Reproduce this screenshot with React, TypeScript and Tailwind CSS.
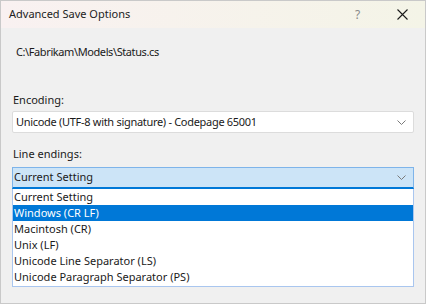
import React from "react";

const Chevron = () => (
  <svg width="9" height="5" viewBox="0 0 9 5" className="text-[#7a7a7a]">
    <path d="M0.5 0.5 L4.5 4.5 L8.5 0.5" fill="none" stroke="currentColor" strokeWidth="1" />
  </svg>
);

export default function App() {
  const items = [
    "Current Setting",
    "Windows (CR LF)",
    "Macintosh (CR)",
    "Unix (LF)",
    "Unicode Line Separator (LS)",
    "Unicode Paragraph Separator (PS)",
  ];
  return (
    <div
      className="w-[426px] h-[304px] border border-[#c9c9c9] bg-[#f0f0f0] flex flex-col text-[11px] text-[#1a1a1a]"
      style={{ fontFamily: '"Segoe UI", "Noto Sans", sans-serif' }}
    >
      <div className="h-[27px] flex items-center bg-gradient-to-r from-[#f9f1f1] to-[#f4f4e7]">
        <div className="pl-[8px] flex-1 text-[11px] text-[#222]">Advanced Save Options</div>
        <div className="w-[46px] flex justify-center text-[#8a8a8a] text-[12px] pl-[3px]">?</div>
        <div className="w-[46px] flex justify-center">
          <svg width="11" height="11" viewBox="0 0 11 11">
            <path d="M0.5 0.5 L10.5 10.5 M10.5 0.5 L0.5 10.5" stroke="#1a1a1a" strokeWidth="1.1" />
          </svg>
        </div>
      </div>
      <div className="px-[11px] flex flex-col">
        <div className="pl-[4px] mt-[15px] h-[17px] leading-[17px] tracking-[-0.4px]">C:\Fabrikam\Models\Status.cs</div>
        <div className="pl-[1px] mt-[31px] h-[17px] leading-[17px]">Encoding:</div>
        <div className="mt-[3px] h-[22px] bg-white border border-[#dcdcdc] rounded-[2px] flex items-center pl-[3px] pr-[7px]">
          <span className="flex-1 tracking-[-0.3px]">Unicode (UTF-8 with signature) - Codepage 65001</span>
          <Chevron />
        </div>
        <div className="pl-[1px] mt-[12px] h-[17px] leading-[17px]">Line endings:</div>
        <div className="mt-[5px] h-[22px] bg-[#cce4f7] border border-[#7eb4ea] border-b-[2px] border-b-[#0078d7] flex items-center pl-[1px] pr-[7px]">
          <span className="flex-1">Current Setting</span>
          <Chevron />
        </div>
        <div className="bg-white border border-[#a9c6ef] border-t-0 flex flex-col pb-[1px]">
          {items.map((it, i) => (
            <div
              key={it}
              className={
                i === 1
                  ? "h-[16px] leading-[16px] pl-[1px] bg-[#0078d7] text-white"
                  : "h-[16px] leading-[16px] pl-[1px]"
              }
            >
              {it}
            </div>
          ))}
        </div>
      </div>
    </div>
  );
}
